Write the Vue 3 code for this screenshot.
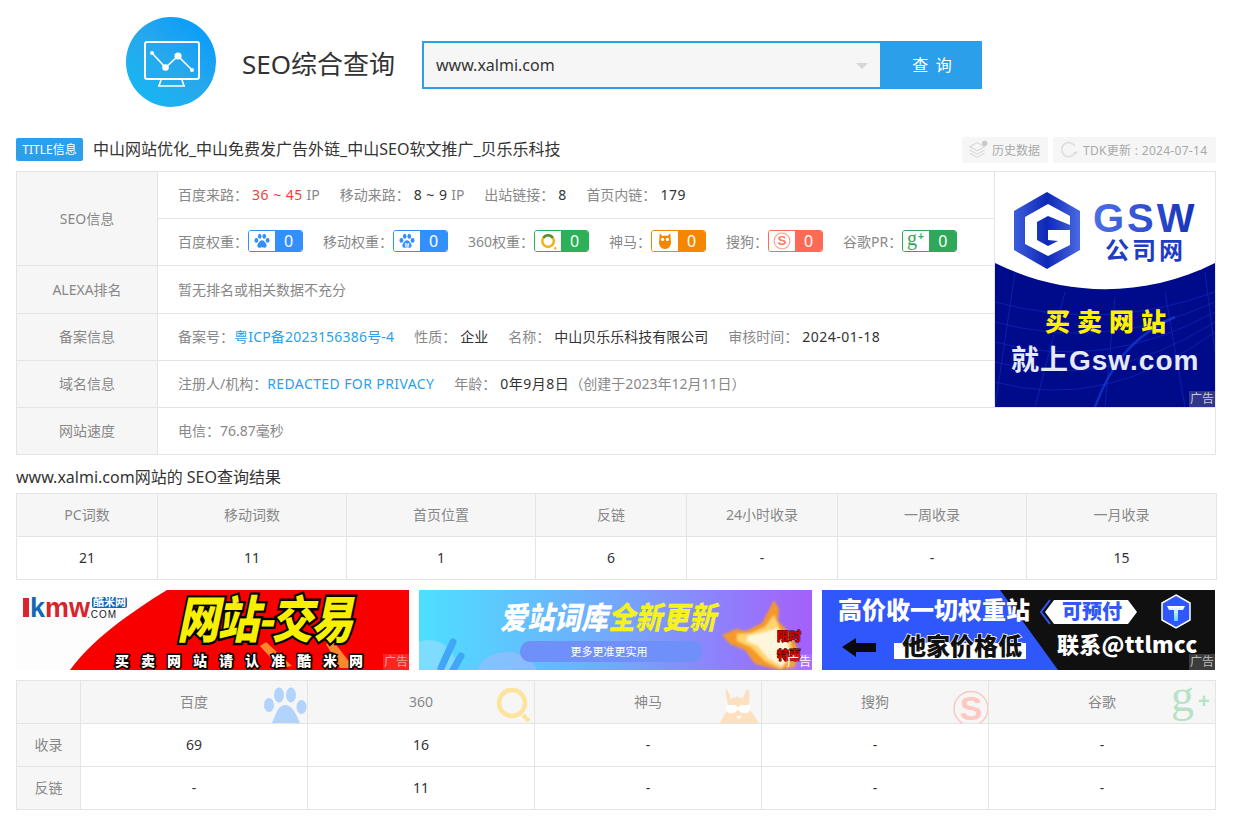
<template>
  <div class="page">
    <!-- icon sprite -->
    <svg class="sprite" aria-hidden="true">
      <symbol id="i-paw" viewBox="0 0 24 23">
        <ellipse cx="3.6" cy="10.6" rx="2.9" ry="3.7" />
        <ellipse cx="8.6" cy="4.4" rx="2.7" ry="3.8" />
        <ellipse cx="15.4" cy="4.4" rx="2.7" ry="3.8" />
        <ellipse cx="20.4" cy="10.6" rx="2.9" ry="3.7" />
        <path d="M12 10.2c-2.7 0-4 2.6-5.700 4.600-1.900 2.300-2 6.800 2 6.800 1.400 0 2.500-.6 3.700-.6s2.300.6 3.700.6c4 0 3.900-4.500 2-6.800-1.700-2-3-4.600-5.700-4.600z" />
      </symbol>
      <symbol id="i-owl" viewBox="0 0 16 20">
        <path d="M2 1l3 3.400c1.800-.7 4.200-.7 6 0L14 1l.6 8c1.200 5-1.600 10-6.600 10S.2 14 1.400 9z" />
        <circle cx="5.300" cy="8.200" r="1.900" fill="#fff" />
        <circle cx="10.700" cy="8.200" r="1.900" fill="#fff" />
      </symbol>
    </svg>

    <header class="top">
      <svg class="logo" viewBox="0 0 90 90">
        <defs>
          <linearGradient id="logoGrad" x1="0.15" y1="0.9" x2="0.85" y2="0.1">
            <stop offset="0" stop-color="#17b6f3" />
            <stop offset="0.5" stop-color="#27a8ec" />
            <stop offset="1" stop-color="#0a9dfa" />
          </linearGradient>
        </defs>
        <circle cx="45" cy="45" r="45" fill="url(#logoGrad)" />
        <rect x="19" y="25" width="54" height="37" rx="2" fill="none" stroke="#fff" stroke-width="2" />
        <path d="M26 36l13.500 14.500L52 39l14 14" fill="none" stroke="#fff" stroke-width="1.600" />
        <circle cx="26" cy="36" r="2" fill="#fff" />
        <circle cx="39.500" cy="50.500" r="3.300" fill="#fff" />
        <circle cx="52" cy="39" r="3.600" fill="#fff" />
        <circle cx="66" cy="53" r="2" fill="#fff" />
        <path d="M32 69h27M35 63l-2 6M56 63l2 6" fill="none" stroke="#fff" stroke-width="1.600" />
      </svg>
      <h1 class="top-title">SEO综合查询</h1>
      <form class="search" @submit.prevent>
        <div class="search-box">
          <input class="search-input" type="text" value="www.xalmi.com" />
          <i class="search-arrow"></i>
        </div>
        <button class="search-btn" type="submit">查 询</button>
      </form>
    </header>

    <section class="title-row">
      <span class="title-tag">TITLE信息</span>
      <span class="title-text">中山网站优化_中山免费发广告外链_中山SEO软文推广_贝乐乐科技</span>
      <a class="tool-btn hist">
        <svg class="tool-icon" viewBox="0 0 24 24" fill="none" stroke="#d9d9d9" stroke-width="1.300">
          <path d="M2 8l9-5 9 5-9 5z" />
          <path d="M2 12l9 5 9-5M2 16l9 5 9-5" />
          <circle cx="20" cy="4" r="3.200" fill="#c8c8c8" stroke="none" />
        </svg>
        历史数据
      </a>
      <a class="tool-btn tdk">
        <svg class="tool-icon" viewBox="0 0 24 24" fill="none" stroke="#dfdfdf" stroke-width="2.200">
          <path d="M19 16a8.500 8.500 0 1 1 0-9" />
          <path d="M16 14h7l-3.500 4z" fill="#dfdfdf" stroke="none" />
        </svg>
        TDK更新 : 2024-07-14
      </a>
    </section>

    <table class="info">
      <colgroup>
        <col class="info-c1" />
        <col />
        <col class="info-c3" />
      </colgroup>
      <tbody>
        <tr class="r47">
          <th rowspan="2">SEO信息</th>
          <td>
            <span class="it gap-20">百度来路：<b class="red num">36 ~ 45</b> IP</span>
            <span class="it gap-20">移动来路：<b class="num">8 ~ 9</b> IP</span>
            <span class="it gap-20">出站链接：<b>8</b></span>
            <span class="it">首页内链：<b class="num">179</b></span>
          </td>
          <td class="ad-cell" rowspan="5">
            <div class="ad-wrap">
              <svg class="ad-gsw" viewBox="0 0 220 235">
                <defs>
                  <linearGradient id="gswB" x1="0" y1="0" x2="1" y2="0">
                    <stop offset="0" stop-color="#3c5ddc" />
                    <stop offset="0.5" stop-color="#0e28b6" />
                    <stop offset="1" stop-color="#4a6ae4" />
                  </linearGradient>
                  <linearGradient id="gswT" x1="0" y1="0" x2="1" y2="0">
                    <stop offset="0" stop-color="#4d70e6" />
                    <stop offset="1" stop-color="#1631b8" />
                  </linearGradient>
                </defs>
                <rect width="220" height="235" fill="#000b8c" />
                <g stroke="#1a2fc4" stroke-width="0.700" fill="none" opacity="0.8">
                  <path d="M0 130q110 30 220-10M0 150q110 30 220-20M0 170q110 30 220-30M0 190q110 30 220-40M0 210q110 30 220-50" />
                  <path d="M20 100L0 235M70 120L40 235M120 125L110 235M170 120L190 235M210 100L220 180" />
                  <path d="M100 235c15-40 35-70 80-90" stroke="#1f48e8" stroke-width="2.500" opacity="0.700" />
                </g>
                <path d="M0 0h220v91c-70 35-150 35-220 0z" fill="#fff" />
                <path d="M52 20l33 19v39l-33 19-33-19V39z" fill="url(#gswB)" />
                <path d="M75 44L53 32 30 45v27l23 12 22-11V58H53v10l10 1-10 5-11-6V50l11-6 22 9z" fill="#fff" />
                <text class="gsw-en" x="98" y="60" fill="url(#gswT)">GSW</text>
                <text class="gsw-cn" x="110" y="87">公司网</text>
                <text class="gsw-yl" x="50" y="159">买卖网站</text>
                <text class="gsw-wh" x="16" y="198">就上Gsw.com</text>
              </svg>
              <span class="ad-mark">广告</span>
            </div>
          </td>
        </tr>
        <tr class="r47">
          <td>
            <span v-for="b in badges" :key="b.label" class="bd-item">
              <span class="bd-label">{{ b.label }}：</span>
              <span class="badge" :class="b.cls">
                <span class="badge-ico">
                  <svg v-if="b.cls === 'b-bd' || b.cls === 'b-mob'" class="ico-paw" viewBox="0 0 24 23">
                    <use href="#i-paw" />
                    <text v-if="b.cls === 'b-mob'" class="ico-m" x="12" y="20">M</text>
                  </svg>
                  <svg v-else-if="b.cls === 'b-360'" class="ico-ring" viewBox="0 0 20 20">
                    <circle cx="9.500" cy="9.500" r="6.800" fill="none" stroke="#f3b21c" stroke-width="3" />
                    <path d="M4 5.500A6.800 6.800 0 0 1 15 5.500" fill="none" stroke="#4c8f3d" stroke-width="3" />
                    <circle cx="18" cy="18" r="1.400" fill="#f3b21c" />
                  </svg>
                  <svg v-else-if="b.cls === 'b-sm'" class="ico-owl" viewBox="0 0 16 20"><use href="#i-owl" /></svg>
                  <svg v-else-if="b.cls === 'b-sg'" class="ico-sg" viewBox="0 0 20 20">
                    <circle cx="10" cy="10" r="8.800" fill="none" stroke="#fb9a8c" stroke-width="1.200" />
                    <text x="10" y="14.800" class="ico-s">S</text>
                  </svg>
                  <svg v-else class="ico-g" viewBox="0 0 24 20">
                    <text x="3" y="14" class="ico-gg">g</text>
                    <text x="14" y="9" class="ico-gp">+</text>
                  </svg>
                </span>
                <span class="badge-num">0</span>
              </span>
            </span>
          </td>
        </tr>
        <tr class="r48">
          <th>ALEXA排名</th>
          <td class="muted">暂无排名或相关数据不充分</td>
        </tr>
        <tr class="r47">
          <th>备案信息</th>
          <td>
            <span class="it gap-20">备案号：<a class="link ls-icp">粤ICP备2023156386号-4</a></span>
            <span class="it gap-20">性质：<b>企业</b></span>
            <span class="it gap-20">名称：<b>中山贝乐乐科技有限公司</b></span>
            <span class="it">审核时间：<b class="num">2024-01-18</b></span>
          </td>
        </tr>
        <tr class="r47">
          <th>域名信息</th>
          <td>
            <span class="it gap-20">注册人/机构：<a class="link ls-who">REDACTED FOR PRIVACY</a></span>
            <span class="it">年龄：<b class="num">0年9月8日</b>（创建于2023年12月11日）</span>
          </td>
        </tr>
        <tr class="r47">
          <th>网站速度</th>
          <td class="muted" colspan="2">电信：76.87毫秒</td>
        </tr>
      </tbody>
    </table>

    <h2 class="result-title">www.xalmi.com网站的 SEO查询结果</h2>

    <table class="grid stats">
      <colgroup>
        <col v-for="s in stats" :key="s.name" :style="{ width: s.w + 'px' }" />
      </colgroup>
      <thead>
        <tr>
          <th v-for="s in stats" :key="s.name">{{ s.name }}</th>
        </tr>
      </thead>
      <tbody>
        <tr>
          <td v-for="s in stats" :key="s.name">{{ s.val }}</td>
        </tr>
      </tbody>
    </table>

    <div class="ads">
      <!-- kmw banner -->
      <div class="ad-wrap">
        <svg class="banner" viewBox="0 0 393 80">
          <rect width="393" height="80" fill="#f90000" />
          <path d="M0 0h151C112 24 76 50 54 80H0z" fill="#fdfdfd" />
          <g fill="#ffb53a" opacity="0.750">
            <path d="M250 52l26 24-12 2-20-22zM318 52l20 26h-14l-14-24z" />
          </g>
          <rect x="7" y="8" width="6" height="19" fill="#d8252b" />
          <text class="k-logo" x="14" y="27"><tspan fill="#1368b4">k</tspan><tspan fill="#d8252b">mw</tspan></text>
          <rect x="76" y="7" width="35" height="11" rx="2" fill="#1368b4" />
          <text class="k-sub" x="77" y="16">酷米网</text>
          <text class="k-com" x="71" y="28">.COM</text>
          <text class="k-main" transform="translate(161 48) scale(1 1.200)">网站-交易</text>
          <text class="k-foot" x="99" y="76">买卖网站请认准酷米网</text>
        </svg>
        <span class="ad-mark red">广告</span>
      </div>
      <!-- aizhan banner -->
      <div class="ad-wrap">
        <svg class="banner" viewBox="0 0 393 80">
          <defs>
            <linearGradient id="azBg" x1="0" y1="0" x2="1" y2="0">
              <stop offset="0" stop-color="#4ddfff" />
              <stop offset="0.5" stop-color="#73a8fb" />
              <stop offset="1" stop-color="#a55ffb" />
            </linearGradient>
            <filter id="azSoft"><feGaussianBlur stdDeviation="1.200" /></filter>
          </defs>
          <rect width="393" height="80" fill="url(#azBg)" />
          <ellipse cx="10" cy="80" rx="28" ry="30" fill="#9fdcff" opacity="0.600" />
          <ellipse cx="88" cy="84" rx="30" ry="22" fill="#b0b8ff" opacity="0.500" />
          <path d="M22 78l12-26M34 80l8-14" stroke="#3fa8f5" stroke-width="7" stroke-linecap="round" />
          <text class="az-main" transform="translate(81 39) scale(1 1.150)">爱站词库<tspan fill="#f6f21e">全新更新</tspan></text>
          <rect x="101" y="51" width="182" height="21" rx="10" fill="#6f90f8" />
          <text class="az-sub" x="190" y="66">更多更准更实用</text>
          <g filter="url(#azSoft)">
            <path d="M303 45l14-6 10 2 16-8 9-17 3-6 5 9-1 12 12 12 8 16-3 18-16 3-24-6-10-14-15-6z" fill="#f59a2c" />
            <path d="M318 44l14-1 14-6 9-12 6 14 10 10 3 16-12 14-16-8-14-14-14-6z" fill="#ffd66e" />
            <path d="M328 46l18-4 12-4 10 12 3 14-8 12-14-8-10-12-11-5z" fill="#fff6dc" />
          </g>
          <text class="az-hot" x="358" y="51">限时</text>
          <text class="az-hot" x="358" y="70">特惠</text>
        </svg>
        <span class="ad-mark clear">广告</span>
      </div>
      <!-- ttlmcc banner -->
      <div class="ad-wrap">
        <svg class="banner" viewBox="0 0 393 80">
          <defs>
            <linearGradient id="ttT" x1="0" y1="0" x2="0" y2="1">
              <stop offset="0" stop-color="#fff" />
              <stop offset="1" stop-color="#58d4ff" />
            </linearGradient>
          </defs>
          <rect width="393" height="80" fill="#101010" />
          <path d="M0 0h178l58 80H0z" fill="#2f57fb" />
          <text class="tt-main" x="16" y="29">高价收一切权重站</text>
          <path d="M20 57l14-9v5h20v9H34v5z" fill="#0a0a0a" />
          <rect x="72" y="53" width="132" height="16" fill="#fff" />
          <text class="tt-low" x="80" y="65">他家价格低</text>
          <path d="M232 10h74l9 12-9 12h-74l-9-12z" fill="#fff" />
          <path d="M228 10l-9 12 9 12" fill="none" stroke="#2f57fb" stroke-width="2" />
          <text class="tt-pay" x="240" y="29">可预付</text>
          <path d="M354 5l14 8v17l-14 8-14-8V13z" fill="#2f57fb" stroke="#fff" stroke-width="1.500" />
          <path d="M345 16h18l-2 4h-5v11h-4V20h-5z" fill="url(#ttT)" />
          <text class="tt-con" x="235" y="63">联系@ttlmcc</text>
        </svg>
        <span class="ad-mark dark">广告</span>
      </div>
    </div>

    <table class="grid engines">
      <colgroup>
        <col class="en-c1" />
        <col v-for="e in engines" :key="e.name" />
      </colgroup>
      <thead>
        <tr>
          <th></th>
          <th v-for="e in engines" :key="e.name" class="en-head">
            {{ e.name }}
            <svg v-if="e.key === 'bd'" class="wm" viewBox="0 0 44 36">
              <g fill="#b2d3fb">
                <ellipse cx="6" cy="18" rx="5" ry="7" />
                <ellipse cx="16" cy="8" rx="5" ry="7.500" />
                <ellipse cx="28" cy="8" rx="5" ry="7.500" />
                <ellipse cx="38.500" cy="20" rx="5" ry="7" />
                <path d="M22 18c-6 0-8 6-13 18h28c-5-12-9-18-15-18z" />
              </g>
            </svg>
            <svg v-else-if="e.key === '360'" class="wm" viewBox="0 0 44 36">
              <circle cx="22" cy="16" r="13" fill="none" stroke="#fce49c" stroke-width="4.500" />
              <path d="M33 28l6 6" stroke="#fce49c" stroke-width="4" />
            </svg>
            <svg v-else-if="e.key === 'sm'" class="wm" viewBox="0 0 44 36">
              <path d="M9 2c2 1 4 6 5 10l3-2 1 1 2-2 2 2 2-1 2 2c1-4 3-10 5-10 2 3 2 9 1 14l1 8c3 2 6 8 9 12H3c2-4 5-10 7-12l1-8c-2-5-3-11-2-14z" fill="#fde0c0" />
              <path d="M9 18h10l1 2h2l1-2h10v3c0 3-2 5-4 5h-3c-2 0-4-2-5-4-1 2-3 4-5 4h-3c-2 0-4-2-4-5z" fill="#fff" />
              <path d="M19 29h6l-3 3z" fill="#fff" />
            </svg>
            <svg v-else-if="e.key === 'sg'" class="wm" viewBox="0 0 44 36">
              <circle cx="27" cy="21.500" r="17" fill="none" stroke="#fcc8c0" stroke-width="1.500" />
              <text x="27" y="33" class="wm-s">S</text>
            </svg>
            <svg v-else class="wm" viewBox="0 0 44 36">
              <text x="0" y="24" class="wm-g">g</text>
              <text x="27" y="21" class="wm-p">+</text>
            </svg>
          </th>
        </tr>
      </thead>
      <tbody>
        <tr v-for="r in engineRows" :key="r.name">
          <th>{{ r.name }}</th>
          <td v-for="(v, i) in r.vals" :key="i">{{ v }}</td>
        </tr>
      </tbody>
    </table>
  </div>
</template>

<script setup>
const badges = [
  { label: '百度权重', cls: 'b-bd' },
  { label: '移动权重', cls: 'b-mob' },
  { label: '360权重', cls: 'b-360' },
  { label: '神马', cls: 'b-sm' },
  { label: '搜狗', cls: 'b-sg' },
  { label: '谷歌PR', cls: 'b-g' }
]

const stats = [
  { name: 'PC词数', val: '21', w: 141 },
  { name: '移动词数', val: '11', w: 189 },
  { name: '首页位置', val: '1', w: 189 },
  { name: '反链', val: '6', w: 151 },
  { name: '24小时收录', val: '-', w: 151 },
  { name: '一周收录', val: '-', w: 189 },
  { name: '一月收录', val: '15', w: 190 }
]

const engines = [
  { key: 'bd', name: '百度' },
  { key: '360', name: '360' },
  { key: 'sm', name: '神马' },
  { key: 'sg', name: '搜狗' },
  { key: 'g', name: '谷歌' }
]

const engineRows = [
  { name: '收录', vals: ['69', '16', '-', '-', '-'] },
  { name: '反链', vals: ['-', '11', '-', '-', '-'] }
]
</script>

<style>
html, body { background: #fff; }
</style>

<style scoped>
.page { width: 1200px; margin-left: 16px; font-family: "Noto Sans", "Noto Sans CJK SC", sans-serif; font-size: 14px; color: #333; }
.sprite { position: absolute; width: 0; height: 0; overflow: hidden; }

.top { height: 137px; padding: 17px 0 0 110px; box-sizing: border-box; display: flex; align-items: flex-start; }
.logo { width: 90px; height: 90px; flex: none; }
.top-title { margin: 28px 26px 0 26px; font-size: 26px; font-weight: 400; line-height: 38px; color: #333; white-space: nowrap; width: 154px; }
.search { display: flex; margin-top: 24px; height: 48px; }
.search-box { position: relative; width: 458px; height: 48px; box-sizing: border-box; border: 2px solid #2b9fea; border-right: 0; background: #f6f6f6; }
.search-input { width: 100%; height: 44px; box-sizing: border-box; border: 0; outline: 0; background: transparent; padding: 0 40px 0 12px; font: 16px "Noto Sans", sans-serif; color: #333; }
.search-arrow { position: absolute; right: 12px; top: 20px; border: 6px solid transparent; border-top: 6px solid #d6d6d6; }
.search-btn { width: 102px; height: 48px; border: 0; background: #2b9fea; color: #fff; font: 16px "Noto Sans CJK SC", sans-serif; letter-spacing: 2px; padding: 0 0 2px 4px; }

.title-row { display: flex; align-items: center; height: 26px; margin-bottom: 8px; }
.title-tag { width: 67px; height: 23px; line-height: 23px; margin-bottom: 2px; text-align: center; background: #2b9fea; color: #fff; font-size: 12px; border-radius: 2px; }
.title-text { margin-left: 10px; padding-bottom: 4px; font-size: 16px; color: #333; flex: 1; white-space: nowrap; }
.tool-btn { display: flex; align-items: center; height: 26px; box-sizing: border-box; padding: 0 8px 0 6px; background: #f6f6f6; border-radius: 3px; color: #a9a9a9; font-size: 12px; white-space: nowrap; }
.tool-btn.hist { width: 86px; }
.tool-btn.tdk { width: 163px; margin-left: 5px; letter-spacing: 0.3px; }
.tool-icon { width: 20px; height: 20px; margin-right: 4px; flex: none; }

table { border-collapse: collapse; table-layout: fixed; width: 1200px; }
.info th, .info td, .grid th, .grid td { border: 1px solid #e4e4e4; font-weight: 400; }
.info th { background: #f6f6f6; color: #888; text-align: center; padding: 0 0 2px; }
.info td { padding: 0 0 2px 20px; color: #888; white-space: nowrap; }
.info-c1 { width: 141px; }
.info-c3 { width: 221px; }
.r47 { height: 47px; }
.r48 { height: 48px; }
.info b { font-weight: 400; color: #333; margin-left: 4px; }
.info b.red { color: #f1403c; }
.num { letter-spacing: 0.5px; }
.it { display: inline-block; }
.gap-20 { margin-right: 20px; }
.link { color: #2b9fea; }
.ls-icp { letter-spacing: 0.2px; }
.ls-who { letter-spacing: 0.4px; }
.muted { color: #888; }
.info td.ad-cell { padding: 0; vertical-align: top; border-left: 0; }

.bd-item { display: inline-flex; align-items: center; margin-right: 20px; vertical-align: middle; }
.bd-item:last-child { margin-right: 0; }
.badge { display: inline-flex; width: 55px; height: 22px; box-sizing: border-box; border: 1px solid; border-radius: 3px; overflow: hidden; }
.badge-ico { width: 26px; display: flex; align-items: center; justify-content: center; background: #fff; }
.badge-num { flex: 1; color: #fff; text-align: center; font-size: 16px; line-height: 20px; }
.b-bd, .b-mob { border-color: #338ffb; color: #338ffb; }
.b-bd .badge-num, .b-mob .badge-num { background: #338ffb; }
.b-360 { border-color: #2cb058; }
.b-360 .badge-num { background: #2cb058; }
.b-sm { border-color: #f58600; color: #f58600; }
.b-sm .badge-num { background: #f58600; }
.b-sg { border-color: #ff6a56; }
.b-sg .badge-num { background: #ff6a56; }
.b-g { border-color: #2fa85a; }
.b-g .badge-num { background: #2fa85a; }
.ico-paw { width: 16px; height: 16px; fill: currentColor; }
.ico-m { font: bold 8px "Liberation Sans", sans-serif; fill: #fff; text-anchor: middle; }
.ico-ring { width: 17px; height: 17px; }
.ico-owl { width: 14px; height: 18px; fill: currentColor; }
.ico-sg { width: 18px; height: 18px; }
.ico-s { font: bold 15px "Liberation Sans", sans-serif; fill: #fb7a68; text-anchor: middle; }
.ico-g { width: 24px; height: 20px; }
.ico-gg { font: 20px "Liberation Serif", serif; fill: #35a85c; }
.ico-gp { font: bold 10px "Liberation Sans", sans-serif; fill: #35a85c; }

.ad-wrap { position: relative; height: 100%; font-size: 0; }
.ad-gsw { display: block; width: 220px; height: 235px; }
.gsw-en { font: bold 40px "Liberation Sans", sans-serif; letter-spacing: 3px; }
.gsw-cn { font: bold 24px "Noto Sans CJK SC", sans-serif; fill: #1e3cc4; letter-spacing: 3px; }
.gsw-yl { font: 900 25px "Noto Sans CJK SC", sans-serif; fill: #fff200; letter-spacing: 7px; }
.gsw-wh { font: bold 28px "Liberation Sans", "Noto Sans CJK SC", sans-serif; fill: #e6e9f6; letter-spacing: 1px; }
.ad-mark { position: absolute; right: 0; bottom: 0; width: 26px; height: 16px; line-height: 16px; text-align: center; font-size: 12px; color: #c9c9d9; background: rgba(120, 120, 140, 0.4); }
.ad-mark.red { color: #f4a0a0; background: rgba(255, 255, 255, 0.15); }
.ad-mark.clear { color: #fff; background: rgba(255, 255, 255, 0.1); }
.ad-mark.dark { color: #bbb; background: rgba(90, 90, 90, 0.6); }

.result-title { margin: 0; height: 38px; line-height: 44px; font-size: 16px; font-weight: 400; color: #333; white-space: nowrap; }

.grid th { height: 40px; background: #f6f6f6; color: #888; text-align: center; padding: 0 0 2px; }
.grid td { height: 40px; text-align: center; color: #333; padding: 0 0 2px; }

.ads { display: flex; justify-content: space-between; width: 1199px; margin: 10px 0; }
.ads .ad-wrap { width: 393px; height: 80px; }
.banner { display: block; width: 393px; height: 80px; }
.k-logo { font: bold 27px "Liberation Sans", sans-serif; }
.k-sub { font: bold 11px "Noto Sans CJK SC", sans-serif; fill: #fff; }
.k-com { font: 10px "Liberation Sans", sans-serif; fill: #222; letter-spacing: 1px; }
.k-main { font: italic 900 42px "Noto Sans CJK SC", sans-serif; fill: #f8f000; stroke: #000; stroke-width: 4px; paint-order: stroke; letter-spacing: -2px; }
.k-foot { font: 900 14px "Noto Sans CJK SC", sans-serif; fill: #fff; stroke: #000; stroke-width: 3px; paint-order: stroke; letter-spacing: 12px; }
.az-main { font: italic 900 27px "Noto Sans CJK SC", sans-serif; fill: #fff; }
.az-sub { font: 11px "Noto Sans CJK SC", sans-serif; fill: #fff; text-anchor: middle; }
.az-hot { font: 900 12px "Noto Sans CJK SC", sans-serif; fill: #d40000; stroke: #200; stroke-width: 1px; paint-order: stroke; }
.tt-main { font: 900 24px "Noto Sans CJK SC", sans-serif; fill: #fff; }
.tt-con { font: 900 22px "Noto Sans CJK SC", sans-serif; fill: #fff; letter-spacing: 0.3px; }
.tt-low { font: 900 24px "Noto Sans CJK SC", sans-serif; fill: #111; stroke: #fff; stroke-width: 1.500px; paint-order: stroke; }
.tt-pay { font: 900 20px "Noto Sans CJK SC", sans-serif; fill: #2f57fb; }

.en-c1 { width: 64px; }
.en-head { position: relative; }
.wm { position: absolute; right: 0; bottom: 0; width: 44px; height: 36px; }
.wm-s { font: bold 34px "Liberation Sans", sans-serif; fill: #fcc8c0; text-anchor: middle; }
.wm-g { font: 46px "Liberation Serif", serif; fill: #b8e2c4; }
.wm-p { font: bold 20px "Liberation Sans", sans-serif; fill: #b8e2c4; }
</style>
